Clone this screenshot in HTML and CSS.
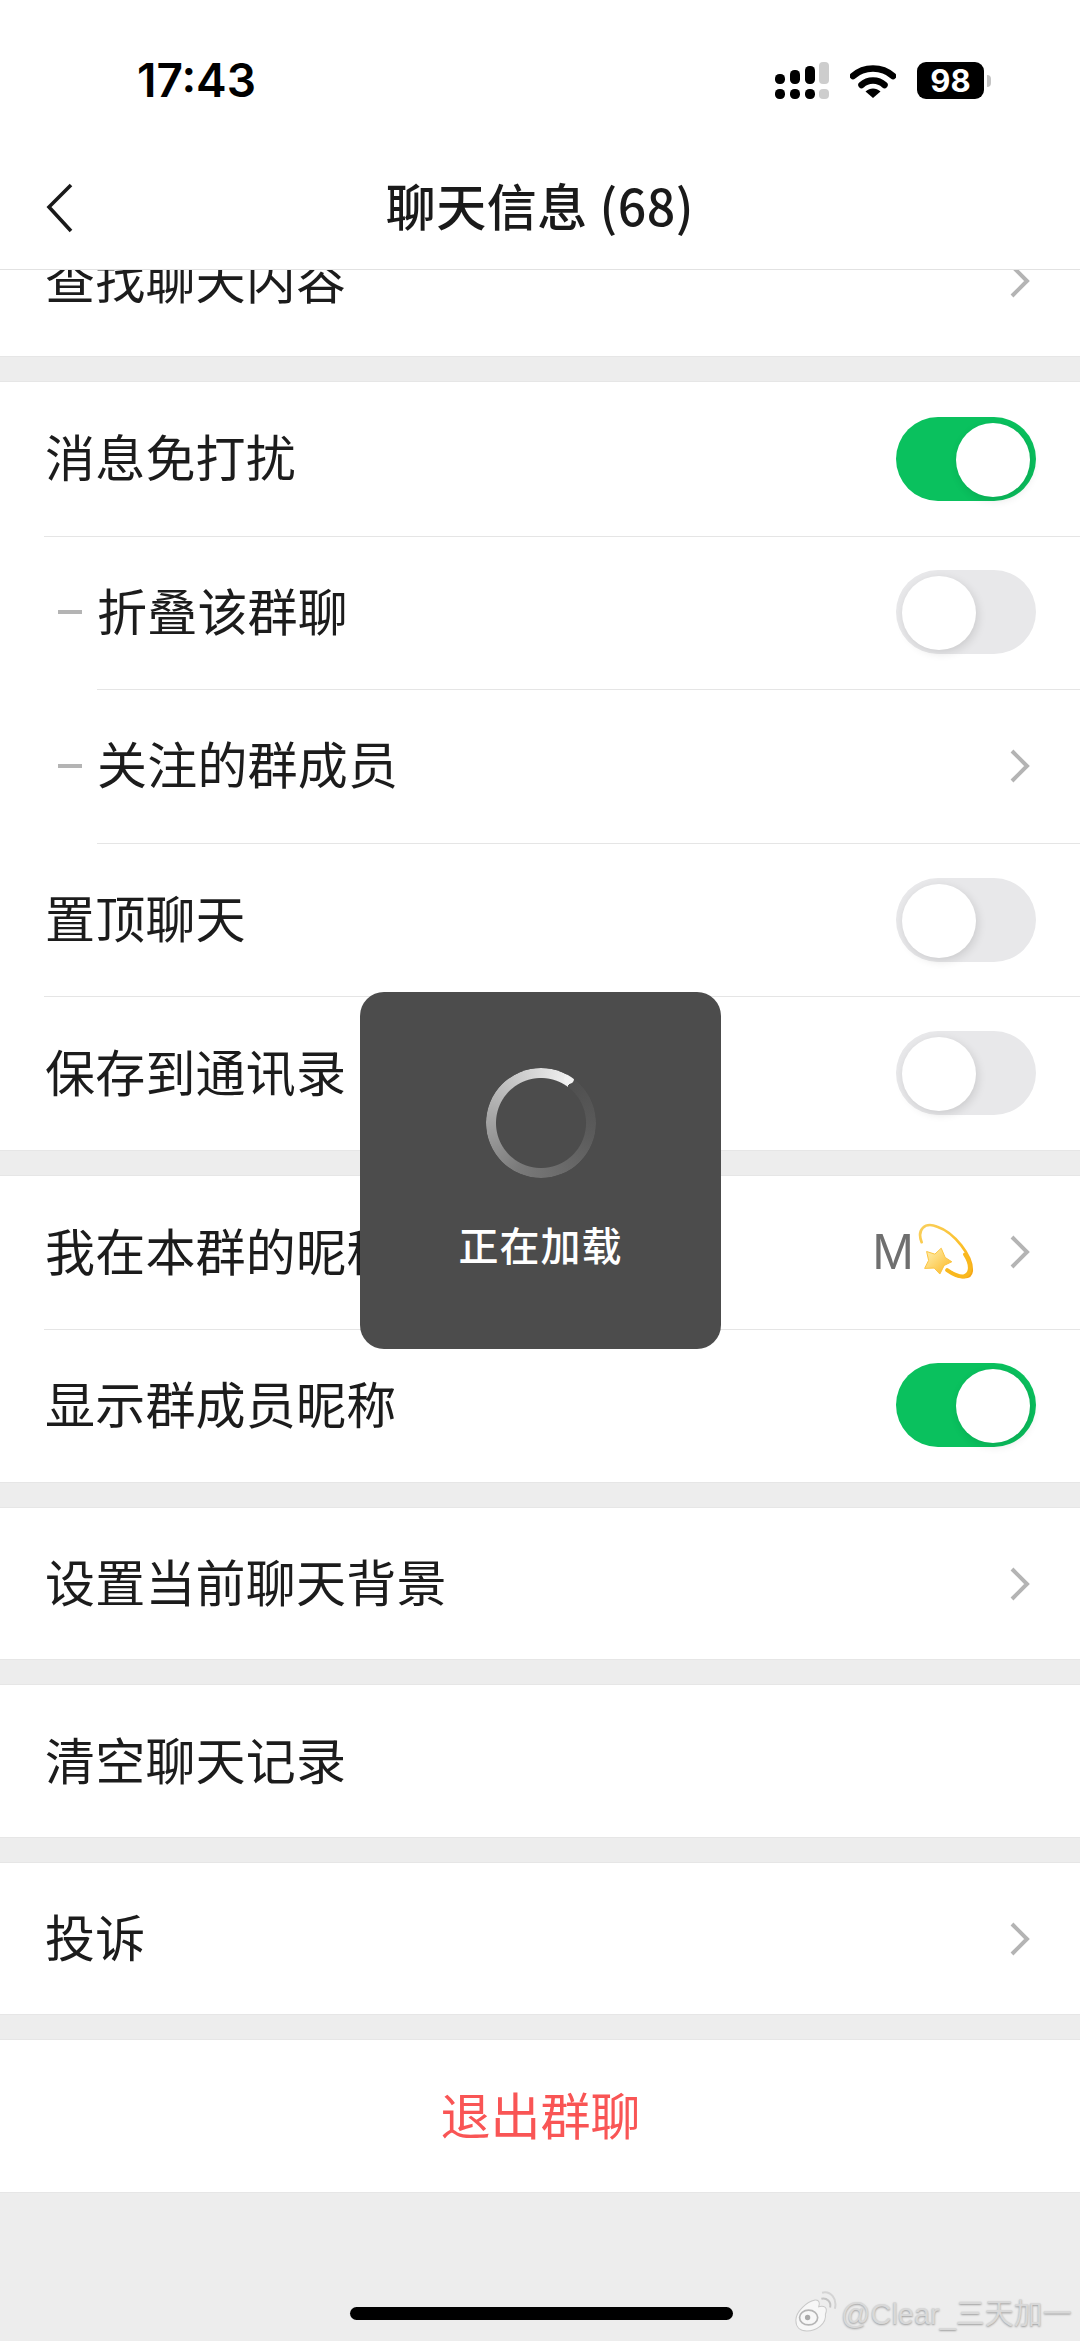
FILE: index.html
```html
<!DOCTYPE html>
<html lang="zh-CN">
<head>
    <meta charset="UTF-8">
    <meta name="viewport" content="width=device-width, initial-scale=1.0">
    <title>聊天信息 (68)</title>
    <link rel="stylesheet" href="styles.css">
</head>
<body>

<div class="page">
    <header class="top">
        <div class="status">
            <span class="time">17:43</span>
            <div class="status-icons">
                <svg class="signal" width="54" height="37" viewBox="0 0 54 37">
                    <rect x="0" y="27" width="10" height="10" rx="4.5"/>
                    <rect x="15" y="27" width="10" height="10" rx="4.5"/>
                    <rect x="30" y="27" width="10" height="10" rx="4.5"/>
                    <rect x="44" y="27" width="10" height="10" rx="4" fill="#cdcdcd"/>
                    <rect x="0" y="12" width="10" height="10" rx="4.5"/>
                    <rect x="15" y="8" width="10" height="14" rx="4.5"/>
                    <rect x="30" y="4" width="10" height="18" rx="4.5"/>
                    <rect x="44" y="0" width="10" height="22" rx="4" fill="#cdcdcd"/>
                </svg>
                <svg class="wifi" width="46" height="34" viewBox="0 0 46 34">
                    <path d="M3 12 C14 2 32 2 43 12" fill="none" stroke="#000" stroke-width="6.5" stroke-linecap="round"/>
                    <path d="M11.5 21 C18 15 28 15 34.5 21" fill="none" stroke="#000" stroke-width="6.5" stroke-linecap="round"/>
                    <path d="M15.5 27.5 C20 23.6 26 23.6 30.5 27.5 L23 34 Z"/>
                </svg>
                <div class="battery"><span>98</span></div>
                <i class="battery-nub"></i>
            </div>
        </div>
        <nav class="nav">
            <svg class="back" width="30" height="50" viewBox="0 0 30 50">
                <path d="M26 2 L4 24 L26 48" fill="none" stroke="#1a1a1a" stroke-width="3.6"/>
            </svg>
            <h1 class="title">聊天信息 (68)</h1>
        </nav>
    </header>

    <div class="cut-row">
        <div class="row">
            <span class="label">查找聊天内容</span>
            <svg class="chevron" width="20" height="34" viewBox="0 0 20 34"><path d="M2 2 L17 17 L2 32"/></svg>
        </div>
    </div>

    <section class="group tall">
        <div class="row">
            <span class="label">消息免打扰</span>
            <div class="switch on"></div>
        </div>
        <div class="row sub">
            <i class="dash"></i>
            <span class="label">折叠该群聊</span>
            <div class="switch"></div>
        </div>
        <div class="row sub">
            <i class="dash"></i>
            <span class="label">关注的群成员</span>
            <svg class="chevron" width="20" height="34" viewBox="0 0 20 34"><path d="M2 2 L17 17 L2 32"/></svg>
        </div>
        <div class="row">
            <span class="label">置顶聊天</span>
            <div class="switch"></div>
        </div>
        <div class="row">
            <span class="label">保存到通讯录</span>
            <div class="switch"></div>
        </div>
    </section>

    <section class="group">
        <div class="row">
            <span class="label">我在本群的昵称</span>
            <span class="value">M</span>
            <svg class="dizzy" width="58" height="62" viewBox="230 125 175 185">
                <defs>
                    <linearGradient id="ringGrad" x1="0" y1="0" x2="1" y2="1">
                        <stop offset="0" stop-color="#f9cf5c"/>
                        <stop offset="0.6" stop-color="#fcc02a"/>
                        <stop offset="1" stop-color="#f5a413"/>
                    </linearGradient>
                    <linearGradient id="starGrad" x1="0" y1="0" x2="1" y2="1">
                        <stop offset="0" stop-color="#fff3b8"/>
                        <stop offset="1" stop-color="#fbb620"/>
                    </linearGradient>
                </defs>
                <path d="M241 188 C226 150 250 126 288 141 C340 158 395 230 392 275 C389 300 358 300 318 272" fill="none" stroke="url(#ringGrad)" stroke-width="8" stroke-linecap="round"/>
                <path d="M372 225 C392 255 392 285 368 291 C352 293 335 284 318 272" fill="none" stroke="#f9b81e" stroke-width="12" stroke-linecap="round"/>
                <path d="M300 206 L312 234 L332 247 L309 258 L296 284 L279 266 L250 267 L262 243 L256 216 L281 224 Z" fill="url(#starGrad)" stroke="#fbc440" stroke-width="3" stroke-linejoin="round"/>
            </svg>
            <svg class="chevron" width="20" height="34" viewBox="0 0 20 34"><path d="M2 2 L17 17 L2 32"/></svg>
        </div>
        <div class="row">
            <span class="label">显示群成员昵称</span>
            <div class="switch on"></div>
        </div>
    </section>

    <section class="group single">
        <div class="row">
            <span class="label">设置当前聊天背景</span>
            <svg class="chevron" width="20" height="34" viewBox="0 0 20 34"><path d="M2 2 L17 17 L2 32"/></svg>
        </div>
    </section>

    <section class="group single">
        <div class="row">
            <span class="label">清空聊天记录</span>
        </div>
    </section>

    <section class="group single">
        <div class="row">
            <span class="label">投诉</span>
            <svg class="chevron" width="20" height="34" viewBox="0 0 20 34"><path d="M2 2 L17 17 L2 32"/></svg>
        </div>
    </section>

    <section class="group single">
        <div class="row exit"><span class="exit-text">退出群聊</span></div>
    </section>

    <div class="toast">
        <div class="spinner"><i class="spinner-cap"></i></div>
        <span class="toast-text">正在加载</span>
    </div>

    <div class="home-bar"></div>

    <div class="watermark">
        <svg width="44" height="42" viewBox="100 100 130 125">
            <path d="M108 190 C108 165 140 135 165 130 C178 128 180 140 176 150 C190 146 205 150 196 172 C200 200 170 222 140 222 C120 222 108 210 108 190 Z" fill="#f7f7f7" stroke="#c9c9c9" stroke-width="3"/>
            <ellipse cx="146" cy="182" rx="27" ry="22" fill="none" stroke="#b5b5b5" stroke-width="5"/>
            <circle cx="143" cy="182" r="8" fill="#a9a9a9"/>
            <path d="M184 126 C200 122 214 136 210 152" fill="none" stroke="#c4c4c4" stroke-width="6"/>
            <path d="M186 108 C212 102 232 126 224 156" fill="none" stroke="#d4d4d4" stroke-width="6"/>
        </svg>
        <span>@Clear_三天加一</span>
    </div>
</div>

</body>
</html>
```

FILE: styles.css
```css
* {
    box-sizing: border-box;
}
body {
    margin: 0;
    font-family: "Noto Sans CJK SC", "Liberation Sans", sans-serif;
    color: #1c1c1c;
}
.page {
    position: relative;
    width: 1080px;
    height: 2341px;
    overflow: hidden;
    background-color: #ededed;
}

/* status bar + nav */
.top {
    height: 270px;
    background-color: #fff;
    border-bottom: 1px solid #e2e2e2;
}
.status {
    height: 112px;
    padding: 50px 89px 0 137px;
    display: flex;
    justify-content: space-between;
    align-items: flex-start;
}
.time {
    font-family: Inter, "Liberation Sans", sans-serif;
    font-size: 46px;
    font-weight: 600;
    line-height: 60px;
    color: #000;
}
.status-icons {
    display: flex;
    align-items: center;
    margin-top: 12px;
}
.wifi {
    margin-left: 21px;
}
.battery {
    width: 67px;
    height: 37px;
    margin-left: 21px;
    background-color: #000;
    border-radius: 9px;
    display: flex;
    align-items: center;
    justify-content: center;
}
.battery span {
    font-family: Inter, "Liberation Sans", sans-serif;
    font-size: 31px;
    font-weight: 700;
    color: #fff;
}
.battery-nub {
    width: 4px;
    height: 12px;
    margin-left: 3px;
    background-color: #c4c4c4;
    border-radius: 0 4px 4px 0;
}
.nav {
    position: relative;
    height: 157px;
    padding-top: 27px;
    display: flex;
    align-items: center;
    justify-content: center;
}
.back {
    position: absolute;
    left: 45px;
    top: 71px;
}
.title {
    margin: 0;
    font-size: 50px;
    font-weight: 500;
    line-height: 72px;
    letter-spacing: 0.5px;
    color: #1a1a1a;
}

/* rows */
.cut-row {
    height: 87px;
    overflow: hidden;
    background-color: #fff;
    border-bottom: 1px solid #e6e6e6;
}
.cut-row .row {
    margin-top: -66px;
}
.group {
    margin-top: 24px;
    background-color: #fff;
    border-top: 1px solid #e6e6e6;
    border-bottom: 1px solid #e6e6e6;
}
.row {
    position: relative;
    height: 153px;
    padding: 0 44px 0 45px;
    display: flex;
    align-items: center;
}
.tall .row {
    height: 153.6px;
}
.single .row {
    height: 151.5px;
}
.row + .row::before {
    content: "";
    position: absolute;
    top: 0;
    right: 0;
    left: 44px;
    height: 1px;
    background-color: #e5e5e5;
}
.sub + .row::before {
    left: 97px;
}
.row.sub {
    padding-left: 58px;
}
.label {
    flex: 1;
    padding-bottom: 7px;
    font-size: 50px;
    line-height: 72px;
    letter-spacing: 0.2px;
    white-space: nowrap;
}
.dash {
    width: 24px;
    height: 4px;
    margin-right: 15px;
    background-color: #b4b4b4;
}
.chevron {
    margin-right: 6px;
}
.chevron path {
    fill: none;
    stroke: #b4b4b4;
    stroke-width: 4;
}
.value {
    font-family: "Liberation Sans", sans-serif;
    font-size: 50px;
    color: #6f6f6f;
}
.dizzy {
    margin: 0 34px 0 4px;
}
.exit {
    justify-content: center;
}
.exit-text {
    padding-bottom: 7px;
    font-size: 50px;
    line-height: 72px;
    color: #f95555;
}

/* switches */
.switch {
    position: relative;
    width: 140px;
    height: 84px;
    border-radius: 42px;
    background-color: #e8e8ea;
}
.switch::after {
    content: "";
    position: absolute;
    top: 6px;
    left: 6px;
    width: 74px;
    height: 74px;
    border-radius: 50%;
    background-color: #fff;
    box-shadow: 2px 3px 10px rgba(0, 0, 0, 0.12);
}
.switch.on {
    background-color: #0ac15e;
}
.switch.on::after {
    left: 60px;
}

/* loading toast */
.toast {
    position: absolute;
    left: 360px;
    top: 992px;
    width: 361px;
    height: 357px;
    padding-top: 76px;
    background-color: #4c4c4c;
    border-radius: 24px;
    display: flex;
    flex-direction: column;
    align-items: center;
}
.spinner {
    position: relative;
    width: 110px;
    height: 110px;
    border-radius: 50%;
    background: conic-gradient(from 36deg, #4f4f4f 0deg, #5c5c5c 70deg, #7a7a7a 170deg, #b9b9b9 270deg, #ececec 350deg, #f2f2f2 360deg);
    -webkit-mask: radial-gradient(circle, transparent 44.5px, #000 45.5px);
    mask: radial-gradient(circle, transparent 44.5px, #000 45.5px);
}
.spinner-cap {
    position: absolute;
    left: 78px;
    top: 5.5px;
    width: 10px;
    height: 10px;
    border-radius: 50%;
    background-color: #f2f2f2;
}
.toast-text {
    margin-top: 37px;
    font-size: 40px;
    font-weight: 500;
    line-height: 58px;
    letter-spacing: 1px;
    color: #fff;
}

.home-bar {
    position: absolute;
    left: 350px;
    top: 2307px;
    width: 383px;
    height: 13px;
    border-radius: 7px;
    background-color: #000;
}

.watermark {
    position: absolute;
    left: 793px;
    top: 2290px;
    display: flex;
    align-items: center;
    gap: 4px;
    font-family: "Liberation Sans", "Noto Sans CJK SC", sans-serif;
    font-size: 29px;
    color: #d8d8d8;
    text-shadow: 0 1px 2px rgba(0, 0, 0, 0.35);
    white-space: nowrap;
}
```
